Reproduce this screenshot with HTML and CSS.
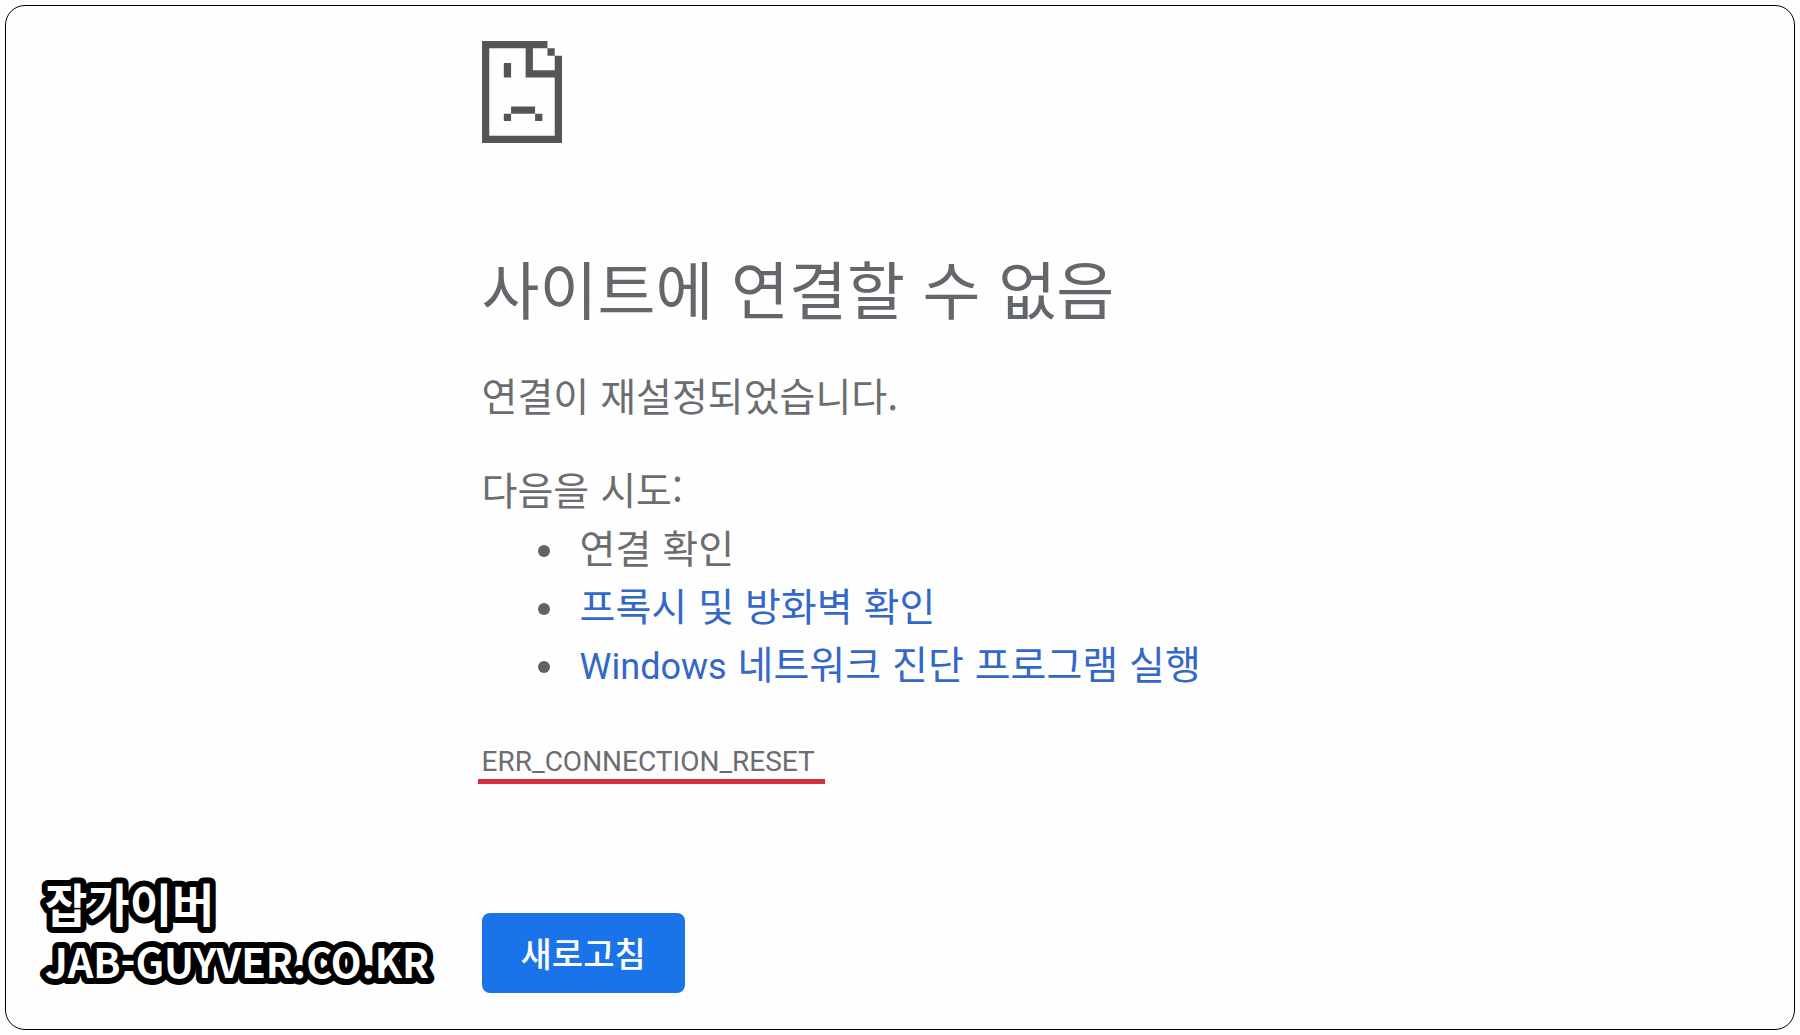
FILE: index.html
```html
<!DOCTYPE html>
<html lang="ko">
<head>
    <meta charset="UTF-8">
    <meta name="viewport" content="width=device-width, initial-scale=1.0">
    <title>사이트에 연결할 수 없음</title>
    <link rel="stylesheet" href="styles.css">
</head>
<body>
    <div class="frame">
        <main class="error-page">
            <svg class="sad-icon" viewBox="0 0 110 140" aria-hidden="true">
                <path d="M0 0H90V10H70V40H100V20H110V140H0ZM10 10V130H100V50H60V10Z" fill-rule="evenodd"/>
                <path d="M90 10h10v10h-10zM30 30h10v20h-10zM40 90h33v10h-33zM30 100h10v10h-10zM73 100h10v10h-10z"/>
            </svg>

            <h1>사이트에 연결할 수 없음</h1>
            <p class="summary">연결이 재설정되었습니다.</p>

            <p class="try">다음을 시도:</p>
            <ul class="suggestions">
                <li>연결 확인</li>
                <li><a href="#proxy">프록시 및 방화벽 확인</a></li>
                <li><a href="#diagnose"><span class="latin">Windows</span> 네트워크 진단 프로그램 실행</a></li>
            </ul>

            <div class="error-code">ERR_CONNECTION_RESET</div>

            <button type="button" class="reload">새로고침</button>
        </main>

        <svg class="watermark" width="420" height="150">
            <text class="name" x="8" y="60">잡가이버</text>
            <text class="site" x="8" y="116">JAB-GUYVER.CO.KR</text>
        </svg>
    </div>
</body>
</html>
```
FILE: styles.css
```css
* {
    box-sizing: border-box;
}

body {
    margin: 0;
    padding: 5px;
    background: #fefefe;
    font-family: "Noto Sans CJK KR", sans-serif;
    color: #6b6d70;
}

.frame {
    position: relative;
    min-height: calc(100vh - 10px);
    border: 1px solid #000;
    border-radius: 20px;
}

.error-page {
    display: flex;
    flex-direction: column;
    align-items: flex-start;
    padding: 35px 24px 32px 26.6%;
    font-size: 39px;
    line-height: 58px;
}

.sad-icon {
    width: 80px;
    height: 102px;
    fill: #555;
}

h1 {
    margin: 106px 0 40px;
    font-size: 63px;
    font-weight: 400;
    line-height: 76px;
    color: #63666b;
}

p {
    margin: 0;
}

.summary {
    margin-bottom: 36px;
}

.suggestions {
    margin: 0;
    padding-left: 56px;
    list-style: none;
}

.suggestions li {
    display: flex;
    align-items: center;
    gap: 30px;
}

.suggestions li::before {
    content: "";
    width: 12px;
    height: 12px;
    margin-top: 10px;
    border-radius: 50%;
    background: #5f6368;
}

.latin {
    font-family: Roboto, sans-serif;
    font-size: 36px;
    line-height: 1;
}

a {
    color: #3367c8;
    text-decoration: none;
}

.error-code {
    margin: 54px 0 129px -4px;
    padding: 0 10px 0 4px;
    border-bottom: 5px solid #d32f3c;
    font-family: Roboto, sans-serif;
    font-size: 28px;
    line-height: 34px;
}

.reload {
    padding: 0 39px;
    border: none;
    border-radius: 8px;
    background: #1a73e8;
    color: #fff;
    font-family: inherit;
    font-size: 34px;
    font-weight: 500;
    line-height: 80px;
    cursor: pointer;
}

.watermark {
    position: absolute;
    left: 31px;
    bottom: 17px;
    fill: #fff;
    stroke: #000;
    stroke-width: 12px;
    stroke-linejoin: round;
    paint-order: stroke;
}

.name {
    font-size: 46px;
    font-weight: 700;
}

.site {
    font-size: 40px;
    font-weight: 700;
}
```
